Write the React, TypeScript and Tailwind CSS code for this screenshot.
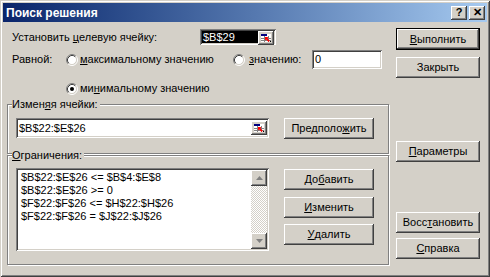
const BTN = 'shadow-[inset_-1px_-1px_0_#404040,inset_1px_1px_0_#ffffff,inset_-2px_-2px_0_#808080]';
const SUNKEN = 'shadow-[inset_1px_1px_0_#808080,inset_-1px_-1px_0_#ffffff,inset_2px_2px_0_#404040,inset_-2px_-2px_0_#d4d0c8]';

function Btn({ children, className = '', def = false }: { children: React.ReactNode; className?: string; def?: boolean }) {
  return (
    <div className={`bg-[#d4d0c8] ${def ? 'border border-black' : ''} ${className}`}>
      <div className={`w-full h-full flex items-center justify-center leading-none ${BTN}`}>{children}</div>
    </div>
  );
}

function Radio({ checked = false }: { checked?: boolean }) {
  return (
    <svg width="12" height="12" viewBox="0 0 12 12" className="shrink-0">
      <circle cx="6" cy="6" r="4.5" fill="#fff" />
      <path d="M9.89 2.11 A5.5 5.5 0 0 0 2.11 9.89" fill="none" stroke="#808080" strokeWidth="1" />
      <path d="M9.89 2.11 A5.5 5.5 0 0 1 2.11 9.89" fill="none" stroke="#ffffff" strokeWidth="1" />
      <path d="M9.18 2.82 A4.5 4.5 0 0 0 2.82 9.18" fill="none" stroke="#404040" strokeWidth="1" />
      <path d="M9.18 2.82 A4.5 4.5 0 0 1 2.82 9.18" fill="none" stroke="#d4d0c8" strokeWidth="1" />
      {checked && <circle cx="6" cy="6" r="2" fill="#000" />}
    </svg>
  );
}

function RefEdit() {
  return (
    <div className={`w-[16px] h-[14px] bg-[#d4d0c8] flex items-center justify-center shrink-0 ${BTN}`}>
      <svg width="12" height="10" viewBox="0 0 12 10">
        <rect x="1" y="1" width="10" height="8" fill="#fff" />
        <rect x="1" y="1" width="6" height="2" fill="#000080" />
        <path d="M1 5.5h10M1 7.5h10M4.5 3v6M8.5 3v6" stroke="#808080" strokeWidth="1" />
        <path d="M11 9h-1v-1h1z" fill="#000" />
        <path d="M5 4h3.5l-1.2 1.2 2.5 2.5-1.2 1.2-2.5-2.5L5 7.5z" fill="#ff0000" />
      </svg>
    </div>
  );
}

function Group({ label, className = '', children }: { label: React.ReactNode; className?: string; children: React.ReactNode }) {
  return (
    <div className={`relative border border-[#808080] shadow-[inset_1px_1px_0_#ffffff,1px_1px_0_#ffffff] ${className}`}>
      <span className="absolute -top-[7px] left-[4px] bg-[#d4d0c8] pr-[2px] leading-[13px]">{label}</span>
      {children}
    </div>
  );
}

function Arrow({ up }: { up?: boolean }) {
  return (
    <div className={`w-[16px] h-[16px] bg-[#d4d0c8] flex items-center justify-center ${BTN}`}>
      <svg width="7" height="4" viewBox="0 0 7 4">
        <path d={up ? 'M3.5 0L7 4H0z' : 'M0 0h7L3.5 4z'} fill="#808080" />
      </svg>
    </div>
  );
}

const CONSTRAINTS = [
  '$B$22:$E$26 <= $B$4:$E$8',
  '$B$22:$E$26 >= 0',
  '$F$22:$F$26 <= $H$22:$H$26',
  '$F$22:$F$26 = $J$22:$J$26',
];

export default function App() {
  return (
    <div className="w-[490px] h-[277px] bg-[#d4d0c8] text-black text-[11px] font-['Liberation_Sans',Arial,sans-serif] shadow-[inset_1px_1px_0_#d4d0c8,inset_-1px_-1px_0_#404040,inset_2px_2px_0_#ffffff,inset_-2px_-2px_0_#808080] p-[3px] flex flex-col">
      <div className="h-[19px] bg-linear-to-r from-[#0a246a] to-[#a6caf0] flex items-center pl-[3px] pr-[2px]">
        <span className="text-white font-bold text-[12px] flex-1">Поиск решения</span>
        <Btn className="w-[16px] h-[14px]"><span className="font-bold text-[11px]">?</span></Btn>
        <Btn className="w-[16px] h-[14px] ml-[2px]"><span className="font-bold text-[11px]">✕</span></Btn>
      </div>

      <div className="flex flex-1">
        <div className="ml-[4px] w-[382px] flex flex-col">
          <div className="mt-[7px] h-[16px] flex items-center">
            <span className="w-[193px] pl-[5px]">Установить <u>ц</u>елевую ячейку:</span>
            <div className={`w-[76px] h-[16px] p-[2px] flex bg-white ${SUNKEN}`}>
              <div className="flex-1 bg-black text-white leading-[12px] pl-[1px]">$B$29</div>
              <RefEdit />
            </div>
          </div>

          <div className="mt-[5px] h-[19px] flex items-center">
            <span className="w-[59px] pl-[5px]">Равной:</span>
            <Radio />
            <span className="ml-[2px] w-[153px]"><u>м</u>аксимальному значению</span>
            <Radio />
            <span className="ml-[4px] w-[63px]"><u>з</u>начению:</span>
            <div className={`w-[70px] h-[19px] bg-white px-[3px] flex items-center ${SUNKEN}`}>0</div>
          </div>

          <div className="mt-[13px] h-[13px] flex items-center pl-[59px]">
            <Radio checked />
            <span className="ml-[2px]">ми<u>н</u>имальному значению</span>
          </div>

          <Group label={<>Измен<u>я</u>я ячейки:</>} className="mt-[9px] h-[50px] flex items-start pt-[13px] pl-[8px]">
            <div className={`w-[253px] h-[20px] bg-white flex items-center pl-[3px] pr-[2px] ${SUNKEN}`}>
              <span className="flex-1">$B$22:$E$26</span>
              <RefEdit />
            </div>
            <Btn className="ml-[15px] w-[90px] h-[21px]">Предполо<u>ж</u>ить</Btn>
          </Group>

          <Group label={<><u>О</u>граничения:</>} className="mt-[1px] h-[110px] flex items-start pt-[12px] pl-[8px]">
            <div className={`w-[253px] h-[83px] bg-white flex p-[2px] ${SUNKEN}`}>
              <div className="flex-1 pl-[3px] pt-[1px] leading-[13px]">
                {CONSTRAINTS.map((c) => (
                  <div key={c} className="whitespace-pre">{c}</div>
                ))}
              </div>
              <div className="w-[16px] flex flex-col bg-[repeating-conic-gradient(#d4d0c8_0_25%,#ffffff_0_50%)] bg-[length:2px_2px]">
                <Arrow up />
                <div className="flex-1" />
                <Arrow />
              </div>
            </div>
            <div className="ml-[15px] flex flex-col">
              <Btn className="w-[90px] h-[21px] mt-[1px]">До<u>б</u>авить</Btn>
              <Btn className="w-[90px] h-[21px] mt-[7px]"><u>И</u>зменить</Btn>
              <Btn className="w-[90px] h-[21px] mt-[6px]"><u>У</u>далить</Btn>
            </div>
          </Group>
        </div>

        <div className="ml-[7px] w-[84px] flex flex-col">
          <Btn def className="mt-[6px] h-[22px]"><u>В</u>ыполнить</Btn>
          <Btn className="mt-[7px] h-[21px]">Закрыть</Btn>
          <Btn className="mt-[63px] h-[21px]"><u>П</u>араметры</Btn>
          <Btn className="mt-[50px] h-[21px]">Восс<u>т</u>ановить</Btn>
          <Btn className="mt-[5px] h-[21px]"><u>С</u>правка</Btn>
        </div>
      </div>
    </div>
  );
}
